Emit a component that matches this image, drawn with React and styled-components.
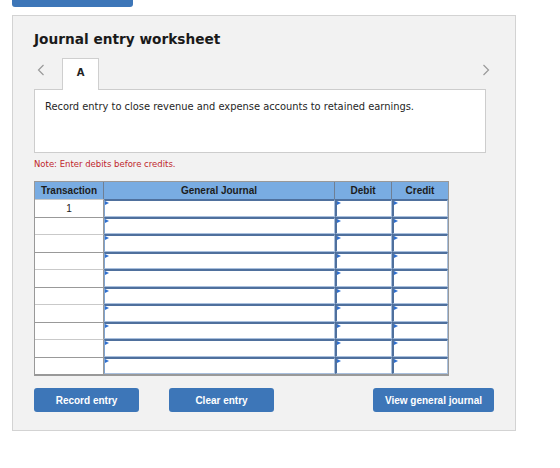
import React from 'react'
import styled, { createGlobalStyle } from 'styled-components'

const ROWS = [18, 17, 18, 17, 18, 17, 18, 17, 18, 17]

const GlobalStyle = createGlobalStyle`
  body {
    margin: 0;
    background: #fff;
    font-family: 'DejaVu Sans', Verdana, sans-serif;
    color: #222;
  }
`

export default function App() {
  return (
    <>
      <GlobalStyle />
      <TopBar />
      <Panel>
        <Title>Journal entry worksheet</Title>

        <TabRow>
          <Chevron dir="left" />
          <Tab>A</Tab>
          <Spacer />
          <Chevron dir="right" />
        </TabRow>

        <TaskBox>
          Record entry to close revenue and expense accounts to retained earnings.
        </TaskBox>

        <Note>Note: Enter debits before credits.</Note>

        <Table>
          <HeadCell>Transaction</HeadCell>
          <HeadCell>General Journal</HeadCell>
          <HeadCell>Debit</HeadCell>
          <HeadCell last>Credit</HeadCell>
          {ROWS.map((h, i) => (
            <React.Fragment key={i}>
              <TxCell h={h} light={i % 2 === 1}>
                {i === 0 ? '1' : ''}
              </TxCell>
              <InputCell h={h} />
              <InputCell h={h} thick />
              <InputCell h={h} thick />
            </React.Fragment>
          ))}
        </Table>

        <Buttons>
          <Button w={105}>Record entry</Button>
          <Button w={105}>Clear entry</Button>
          <Button w={121} push>
            View general journal
          </Button>
        </Buttons>
      </Panel>
    </>
  )
}

function Chevron({ dir }) {
  const d = dir === 'left' ? 'M6.5 1 L1.5 6 L6.5 11' : 'M1.5 1 L6.5 6 L1.5 11'
  return (
    <ChevronIcon width="8" height="12" viewBox="0 0 8 12" dir={dir}>
      <path d={d} fill="none" stroke="#9a9a9a" strokeWidth="1.2" />
    </ChevronIcon>
  )
}

const TopBar = styled.div`
  margin-left: 12px;
  width: 121px;
  height: 7px;
  background: #3d76b8;
  border-radius: 0 0 3px 3px;
`

const Panel = styled.div`
  box-sizing: border-box;
  margin: 8px 0 0 12px;
  width: 504px;
  height: 416px;
  padding: 15px 21px 0;
  background: #f2f2f2;
  border: 1px solid #d3d3d3;
`

const Title = styled.div`
  font-size: 13.7px;
  line-height: 17px;
  font-weight: bold;
  color: #1a1a1a;
`

const TabRow = styled.div`
  display: flex;
  align-items: flex-start;
  margin-top: 10px;
  width: 460px;
`

const ChevronIcon = styled.svg`
  margin-top: 6px;
  margin-left: ${(p) => (p.dir === 'left' ? '3px' : '0')};
  margin-right: ${(p) => (p.dir === 'left' ? '0' : '4px')};
  flex-shrink: 0;
`

const Tab = styled.div`
  position: relative;
  z-index: 1;
  box-sizing: border-box;
  margin-left: 17px;
  margin-bottom: -1px;
  width: 37px;
  height: 32px;
  padding-top: 8px;
  background: #fff;
  border: 1px solid #cfcfcf;
  border-bottom: none;
  text-align: center;
  font-size: 10px;
  font-weight: bold;
`

const Spacer = styled.div`
  flex: 1;
`

const TaskBox = styled.div`
  box-sizing: border-box;
  width: 452px;
  height: 64px;
  padding: 11px 10px 0;
  background: #fff;
  border: 1px solid #cdcdcd;
  font-size: 9.9px;
  line-height: 12px;
  color: #1f1f1f;
`

const Note = styled.div`
  margin-top: 5px;
  font-size: 8.5px;
  line-height: 12px;
  color: #c0272d;
`

const Table = styled.div`
  box-sizing: border-box;
  display: grid;
  grid-template-columns: 69px 231px 57px 56px;
  width: 415px;
  margin-top: 11px;
  border: 1px solid #999;
  border-right-width: 2px;
  border-bottom-width: 2px;
  font-family: 'Liberation Sans', Arial, sans-serif;
`

const HeadCell = styled.div`
  height: 17px;
  line-height: 17px;
  text-align: center;
  background: #79ace2;
  border-right: ${(p) => (p.last ? 'none' : '1px solid #6f7f94')};
  font-size: 10px;
  font-weight: bold;
  color: #1c1c1c;
`

const TxCell = styled.div`
  box-sizing: border-box;
  height: ${(p) => p.h}px;
  padding-top: 2px;
  background: #fff;
  border-top: 1px solid ${(p) => (p.light ? '#999' : '#c9c9c9')};
  border-right: 1px solid #999;
  text-align: center;
  font-size: 10px;
  line-height: 13px;
  color: #222;
`

const InputCell = styled.div`
  position: relative;
  box-sizing: border-box;
  height: ${(p) => p.h}px;
  background: #fff;
  border-top: 2px solid #4f709d;
  border-left: ${(p) => (p.thick ? '2px solid #4f709d' : '1px solid #7fa4d2')};
  border-right: 1px solid #a9c0de;
  border-bottom: 1px solid #a9c0de;

  &::before {
    content: '';
    position: absolute;
    top: 0;
    left: 0;
    border-top: 2px solid transparent;
    border-bottom: 2px solid transparent;
    border-left: 4px solid #2f6fcf;
  }
`

const Buttons = styled.div`
  display: flex;
  gap: 30px;
  margin-top: 12px;
  width: 460px;
`

const Button = styled.button`
  box-sizing: border-box;
  width: ${(p) => p.w}px;
  height: 24px;
  margin-left: ${(p) => (p.push ? 'auto' : '0')};
  padding: 0;
  background: #3d76b8;
  border: none;
  border-radius: 3px;
  color: #fff;
  font-family: 'Liberation Sans', Arial, sans-serif;
  font-size: 10px;
  font-weight: bold;
  cursor: pointer;
`
